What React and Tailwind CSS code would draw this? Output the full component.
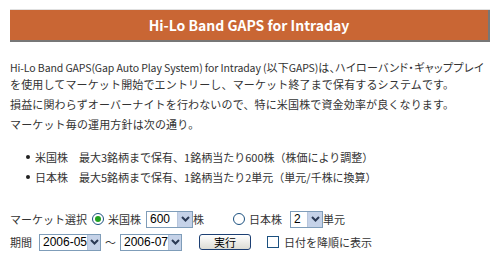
import React from "react";

const jp = { fontFamily: '"Noto Sans CJK JP", sans-serif' };
const latin = { fontFamily: '"Liberation Sans", "Noto Sans CJK JP", sans-serif' };

const Chevron = () => (
  <svg width="9" height="6" viewBox="0 0 9 6">
    <path d="M1 1 L4.5 4.5 L8 1" fill="none" stroke="#2b3a55" strokeWidth="2" />
  </svg>
);

const Select = ({ value, width = "w-[47px]" }) => (
  <div className={`flex h-[17px] ${width} shrink-0 border border-[#7f9db9] bg-white`}>
    <div className="flex-1 whitespace-nowrap pl-[3px] text-[12px] leading-[15px] text-black" style={latin}>
      {value}
    </div>
    <div className="flex w-[15px] items-center justify-center border-l border-[#b8c6dc] bg-[#c5d2e8]">
      <Chevron />
    </div>
  </div>
);

const Radio = ({ checked }) => (
  <div className="flex h-[12px] w-[12px] shrink-0 items-center justify-center rounded-full border border-[#1c5180] bg-white">
    {checked && <div className="h-[6px] w-[6px] rounded-full bg-[#21a121]" />}
  </div>
);

export default function App() {
  return (
    <div className="h-[268px] w-[500px] overflow-hidden bg-white pt-[9px] text-[#333]" style={jp}>
      {/* HEADER */}
      <div className="mx-[10px] border-t border-[#e0e0e0]">
        <div className="flex h-[32px] items-center justify-center border-b-2 border-r-2 border-[#777] bg-[#c96634] text-[14px] font-bold text-white">
          Hi-Lo Band GAPS for Intraday
        </div>
      </div>

      {/* INTRO */}
      <div className="mt-[17px] whitespace-nowrap px-[10px] text-[11px] leading-[17px] tracking-[0.15px]">
        <p>
          <span className="text-[10.5px] tracking-[-0.1px]">Hi-Lo Band GAPS(Gap Auto Play System) for Intraday (</span>
          以下<span className="text-[10.5px] tracking-[-0.1px]">GAPS)</span>
          <span className="tracking-[0.3px] [font-feature-settings:'palt']">は、ハイローバンド・ギャッププレイ</span>
          <br />
          を使用してマーケット開始でエントリーし、マーケット終了まで保有するシステムです。
        </p>
        <p className="mt-[3px]">損益に関わらずオーバーナイトを行わないので、特に米国株で資金効率が良くなります。</p>
        <p className="mt-[3px]">マーケット毎の運用方針は次の通り。</p>
      </div>

      {/* POLICY */}
      <ul className="mt-[14px] whitespace-nowrap pl-[26px] text-[11px] leading-[20px]">
        <li className="flex items-center gap-[5px]">
          <span className="h-[4px] w-[4px] rounded-full bg-[#222]" />
          <span>米国株　最大3銘柄まで保有、1銘柄当たり600株（株価により調整）</span>
        </li>
        <li className="flex items-center gap-[5px]">
          <span className="h-[4px] w-[4px] rounded-full bg-[#222]" />
          <span>日本株　最大5銘柄まで保有、1銘柄当たり2単元（単元/千株に換算）</span>
        </li>
      </ul>

      {/* FORM */}
      <div className="mt-[22px] whitespace-nowrap px-[10px] text-[11px]">
        <div className="flex h-[20px] items-center">
          <span className="w-[82px]">マーケット選択</span>
          <Radio checked />
          <span className="ml-[4px] mr-[5px]">米国株</span>
          <Select value="600" width="w-[47px]" />
          <span>株</span>
          <span className="ml-[29px]"><Radio /></span>
          <span className="ml-[4px] mr-[8px]">日本株</span>
          <Select value="2" width="w-[33px]" />
          <span>単元</span>
        </div>
        <div className="mt-[3px] flex h-[20px] items-center">
          <span className="mr-[7px]">期間</span>
          <Select value="2006-05" width="w-[62px]" />
          <span className="mx-[4px]">～</span>
          <Select value="2006-07" width="w-[62px]" />
          <button className="ml-[17px] h-[16px] w-[52px] shrink-0 rounded-[3px] border border-[#1c3f73] bg-gradient-to-b from-white to-[#dcdcd4] text-[11px] leading-[14px] text-black">
            実行
          </button>
          <span className="ml-[16px] h-[12px] w-[12px] shrink-0 border border-[#1c5180] bg-white" />
          <span className="ml-[5px]">日付を降順に表示</span>
        </div>
      </div>
    </div>
  );
}
